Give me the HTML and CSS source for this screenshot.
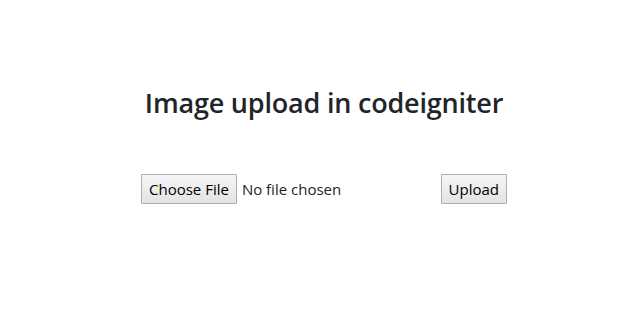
FILE: index.html
```html
<!DOCTYPE html>
<html>
<head>
<meta charset="utf-8">
<link rel="stylesheet" href="styles.css">
</head>
<body>
<main class="page">
  <h1 class="title">Image upload in codeigniter</h1>
  <form class="upload-form">
    <div class="file-field">
      <span class="btn">Choose File</span>
      <span class="file-name">No file chosen</span>
    </div>
    <button type="button" class="btn">Upload</button>
  </form>
</main>
</body>
</html>
```
FILE: styles.css
```css
html, body {
  margin: 0;
  padding: 0;
  background: #fff;
}
body {
  font-family: "Open Sans", "Noto Sans", sans-serif;
  color: #212529;
}
.page {
  display: flex;
  flex-direction: column;
  align-items: center;
  padding-left: 10px;
  padding-top: 84px;
}
.title {
  margin: 0;
  font-size: 27px;
  font-weight: 600;
  line-height: 38px;
  letter-spacing: -0.2px;
}
.upload-form {
  margin-top: 52px;
  width: 366px;
  display: flex;
  justify-content: space-between;
  align-items: center;
}
.file-field {
  display: flex;
  align-items: center;
  gap: 5px;
}
.btn {
  box-sizing: border-box;
  height: 30px;
  padding: 0 7px;
  display: inline-flex;
  align-items: center;
  font-family: "Open Sans", "Noto Sans", sans-serif;
  font-size: 15px;
  color: #000;
  background: linear-gradient(#f6f6f6, #e3e3e3);
  border: 1px solid #adadad;
  border-radius: 1px;
}
.file-name {
  font-size: 15px;
  color: #212529;
}
```
